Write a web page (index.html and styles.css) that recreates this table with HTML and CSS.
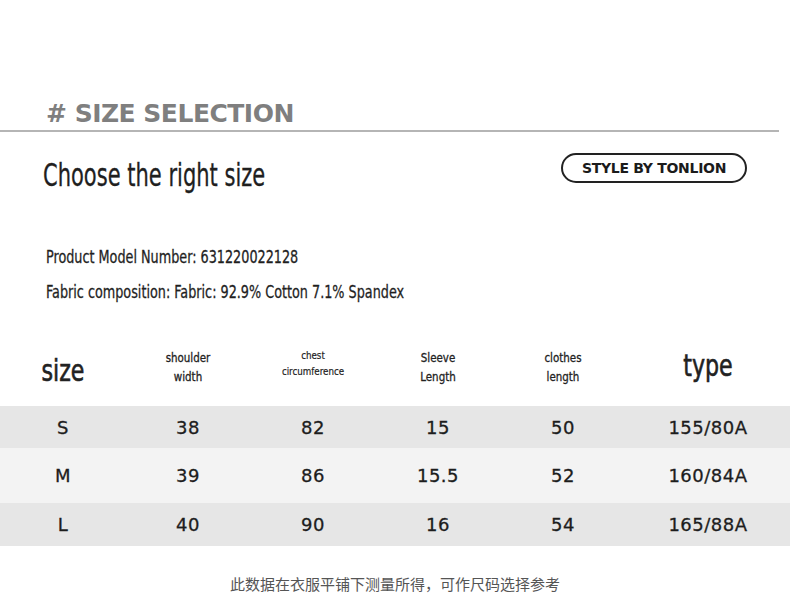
FILE: index.html
```html
<!DOCTYPE html>
<html>
<head>
<meta charset="utf-8">
<link rel="stylesheet" href="styles.css">
</head>
<body>
<div class="page">
  <div class="section-head">
    <h2 class="section-title"># SIZE SELECTION</h2>
  </div>
  <div class="intro">
    <h1 class="choose">Choose the right size</h1>
    <div class="pill">STYLE BY TONLION</div>
  </div>
  <div class="info">
    <p class="info-line">Product Model Number: 631220022128</p>
    <p class="info-line">Fabric composition: Fabric: 92.9% Cotton 7.1% Spandex</p>
  </div>
  <div class="table">
    <div class="row head">
      <div class="cell big">size</div>
      <div class="cell small">shoulder<br>width</div>
      <div class="cell tiny">chest<br>circumference</div>
      <div class="cell small">Sleeve<br>Length</div>
      <div class="cell small">clothes<br>length</div>
      <div class="cell big type">type</div>
    </div>
    <div class="row data dark r1">
      <div class="cell">S</div><div class="cell">38</div><div class="cell">82</div><div class="cell">15</div><div class="cell">50</div><div class="cell">155/80A</div>
    </div>
    <div class="row data light r2">
      <div class="cell">M</div><div class="cell">39</div><div class="cell">86</div><div class="cell">15.5</div><div class="cell">52</div><div class="cell">160/84A</div>
    </div>
    <div class="row data dark r3">
      <div class="cell">L</div><div class="cell">40</div><div class="cell">90</div><div class="cell">16</div><div class="cell">54</div><div class="cell">165/88A</div>
    </div>
  </div>
  <p class="note">此数据在衣服平铺下测量所得，可作尺码选择参考</p>
</div>
</body>
</html>
```

FILE: styles.css
```css
* { box-sizing: border-box; }
html, body { margin: 0; padding: 0; background: #fff; }
body { width: 790px; height: 593px; overflow: hidden; font-family: "DejaVu Sans", sans-serif; }
.page { padding-top: 98px; }
.section-head {
  width: 779px;
  border-bottom: 2px solid #b5b5b5;
  padding-left: 46px;
  height: 34px;
}
.section-title {
  margin: 0;
  font-family: "DejaVu Sans", sans-serif;
  font-weight: bold;
  font-size: 25px;
  line-height: 32px;
  color: #7f7f7f;
  letter-spacing: -0.5px;
}
.intro {
  display: flex;
  justify-content: space-between;
  align-items: flex-start;
  padding: 19px 43px 0 43px;
  height: 107px;
}
.choose {
  margin: 0;
  font-family: "DejaVu Sans Condensed", "Liberation Sans Narrow", sans-serif;
  font-stretch: condensed;
  font-weight: normal;
  font-size: 32px;
  line-height: 48px;
  color: #1f1f1f;
  transform: scaleX(0.73);
  transform-origin: left center;
  white-space: nowrap;
  -webkit-text-stroke: 0.3px #1f1f1f;
}
.pill {
  margin-top: 2px;
  width: 186px;
  height: 30px;
  border: 2px solid #222;
  border-radius: 15px;
  display: flex;
  align-items: center;
  justify-content: center;
  font-family: "DejaVu Sans", sans-serif;
  font-weight: bold;
  font-size: 14px;
  color: #1b1b1b;
  letter-spacing: -0.3px;
}
.info { padding-left: 46px; }
.info-line {
  margin: 0;
  font-family: "DejaVu Sans Condensed", "Liberation Sans Narrow", sans-serif;
  font-stretch: condensed;
  font-size: 18px;
  line-height: 35px;
  color: #1f1f1f;
  transform: scaleX(0.79);
  transform-origin: left center;
  white-space: nowrap;
  -webkit-text-stroke: 0.3px #1f1f1f;
}
.table { margin-top: 22px; }
.row {
  display: grid;
  grid-template-columns: 126px 124px 126px 124px 126px 164px;
  align-items: center;
  text-align: center;
}
.head { height: 75px; color: #222; }
.cell { font-family: "DejaVu Sans Condensed", sans-serif; }
.big { font-size: 30px; line-height: 30px; transform: scaleX(0.82); padding-top: 4px; -webkit-text-stroke: 0.6px #222; }
.type { padding-top: 0; margin-bottom: 6px; }
.small { font-size: 13px; line-height: 19px; transform: scaleX(0.88); margin-bottom: 4px; -webkit-text-stroke: 0.3px #222; }
.tiny { font-size: 11px; line-height: 16px; transform: scaleX(0.88); margin-bottom: 10px; -webkit-text-stroke: 0.2px #222; }
.data .cell {
  font-family: "DejaVu Sans", sans-serif;
  font-size: 18px;
  color: #1d1d1d;
  letter-spacing: 0.5px;
  -webkit-text-stroke: 0.3px #1d1d1d;
}
.dark { background: #e6e6e6; }
.light { background: #f3f3f3; }
.r1 { height: 42px; }
.r2 { height: 55px; }
.r3 { height: 43px; }
.note {
  margin: 28px 0 0 0;
  text-align: center;
  font-family: "Noto Sans CJK SC", sans-serif;
  font-size: 15px;
  line-height: 20px;
  color: #555;
}
```
